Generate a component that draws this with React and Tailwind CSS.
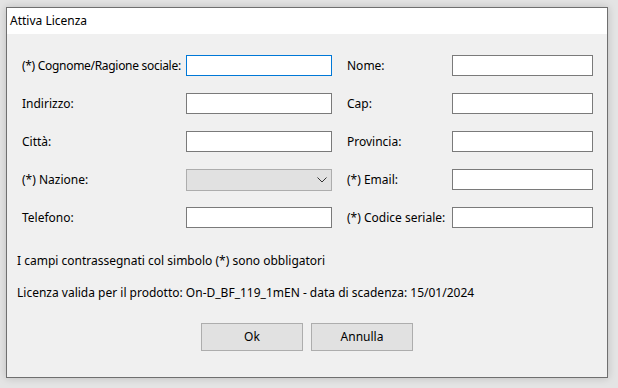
export default function App() {
  const left = [
    { label: '(*) Cognome/Ragione sociale:', focus: true, tight: true },
    { label: 'Indirizzo:' },
    { label: 'Città:' },
    { label: '(*) Nazione:', combo: true },
    { label: 'Telefono:' },
  ];
  const right = ['Nome:', 'Cap:', 'Provincia:', '(*) Email:', '(*) Codice seriale:'];
  const rowTops = ['mt-0', 'mt-[17px]', 'mt-[17px]', 'mt-[17px]', 'mt-[17px]'];

  return (
    <div className="w-[618px] h-[388px] bg-[#e4e4e4] pt-[7px] pl-[6px] overflow-hidden" style={{ fontFamily: '"Noto Sans", "Open Sans", sans-serif' }}>
      <div className="w-[602px] h-[371px] border border-[#6f6f6f] bg-[#f0f0f0] shadow-[0_0_8px_rgba(0,0,0,0.18)] flex flex-col text-[12px] text-black">
        <div className="h-[26px] bg-white pl-[3px] flex items-center">Attiva Licenza</div>

        <div className="pt-[21px] pl-[15px]">
          {left.map((l, i) => (
            <div key={i} className={`flex items-center h-[21px] ${rowTops[i]}`}>
              <div className={`w-[164px] whitespace-nowrap ${l.tight ? 'tracking-[-0.3px]' : ''}`}>{l.label}</div>
              {l.combo ? (
                <div className="w-[146px] h-[22px] border border-[#adadad] bg-[#e1e1e1] flex items-center justify-end pr-[4px]">
                  <svg width="10" height="6" viewBox="0 0 10 6" fill="none">
                    <path d="M0.5 0.5 L5 5 L9.5 0.5" stroke="#333" strokeWidth="1" />
                  </svg>
                </div>
              ) : (
                <div className={`w-[146px] h-[21px] bg-white border ${l.focus ? 'border-[#0078d7]' : 'border-[#7a7a7a]'}`} />
              )}
              <div className="w-[15px]" />
              <div className="w-[105px] whitespace-nowrap">{right[i]}</div>
              <div className="w-[141px] h-[21px] bg-white border border-[#7a7a7a]" />
            </div>
          ))}
        </div>

        <div className="pl-[10px] mt-[25px] leading-[16px]">I campi contrassegnati col simbolo (*) sono obbligatori</div>
        <div className="pl-[10px] mt-[16px] leading-[16px]">Licenza valida per il prodotto: On-D_BF_119_1mEN - data di scadenza: 15/01/2024</div>

        <div className="flex justify-center gap-[8px] mt-[22px]">
          <button className="w-[102px] h-[28px] border border-[#adadad] bg-[#e1e1e1]">Ok</button>
          <button className="w-[102px] h-[28px] border border-[#adadad] bg-[#e1e1e1]">Annulla</button>
        </div>
      </div>
    </div>
  );
}
